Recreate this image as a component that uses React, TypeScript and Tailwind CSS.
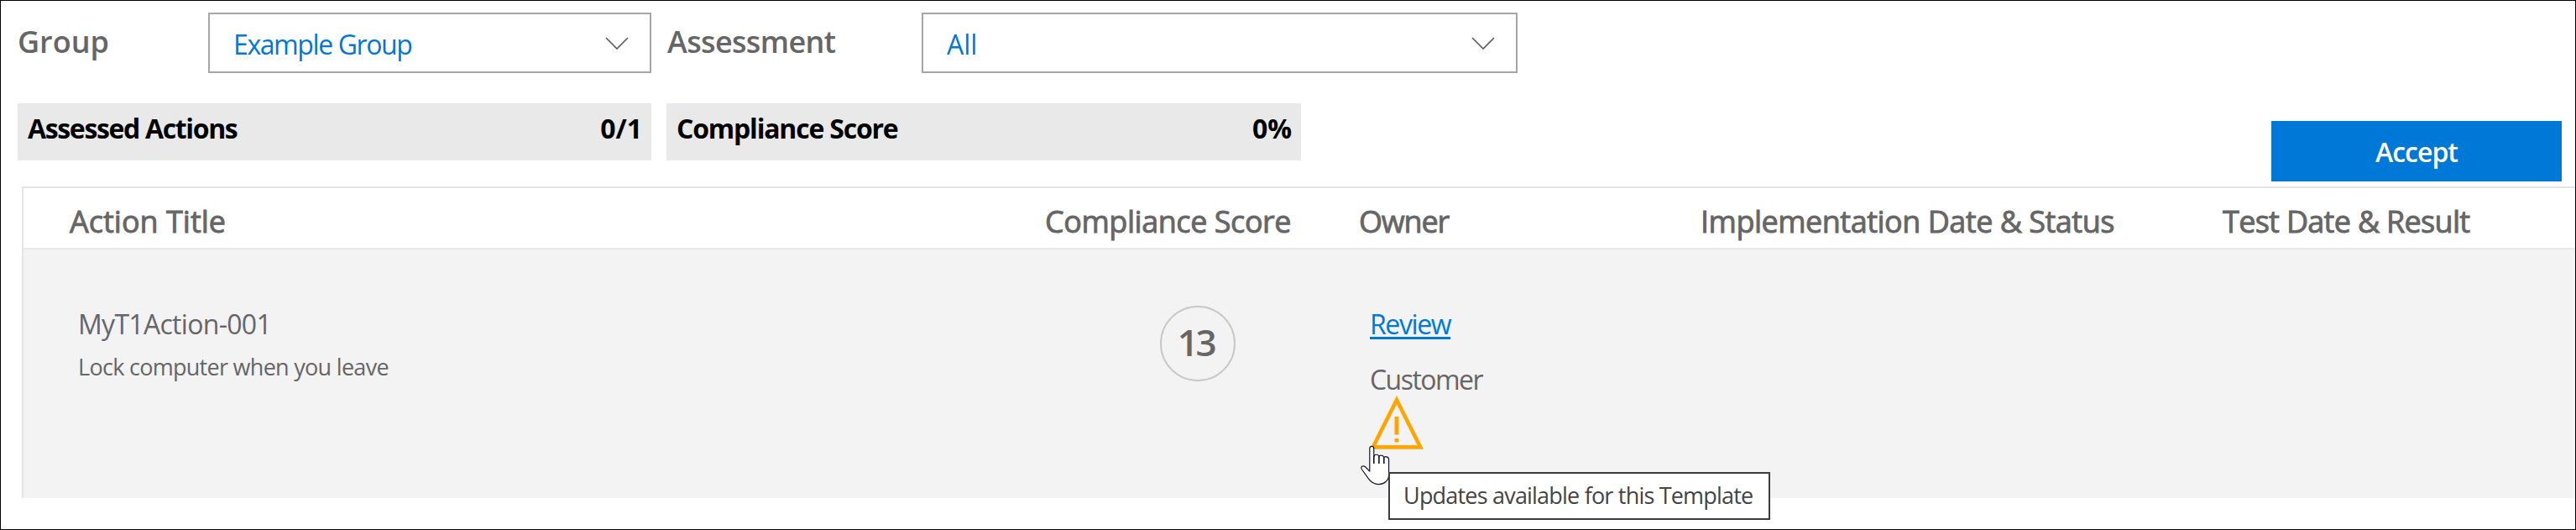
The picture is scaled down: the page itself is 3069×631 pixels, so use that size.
import type { ReactNode } from "react";

function Chevron() {
  return (
    <svg className="mt-[26px] mr-[24px] h-[18px] w-[30px] shrink-0" viewBox="0 0 30 18" fill="none">
      <path d="M2 2 L15 15 L28 2" stroke="#5f5f5f" strokeWidth="1.7" />
    </svg>
  );
}

function Select({ width, children }: { width: string; children: ReactNode }) {
  return (
    <div className={`flex h-[72px] shrink-0 items-start justify-between border-2 border-[#a6a6a6] bg-white pl-[28px] text-[32px] leading-none text-[#0078d7] ${width}`}>
      <span className="mt-[20px] whitespace-nowrap">{children}</span>
      <Chevron />
    </div>
  );
}

function Metric({ label, value, width, tracking }: { label: string; value: string; width: string; tracking: string }) {
  return (
    <div className={`flex h-[68px] shrink-0 items-start justify-between bg-[#e9e9e9] pt-[14px] pr-[11px] pl-[12px] text-[32px] leading-none font-bold text-black ${width}`}>
      <span className={tracking}>{label}</span>
      <span>{value}</span>
    </div>
  );
}

function WarningIcon() {
  return (
    <svg className="block h-[64px] w-[64px]" viewBox="0 0 64 64" fill="none">
      <path d="M32 5.2 L60.3 61.4 H3.7 Z" stroke="#ffa500" strokeWidth="4.6" />
      <path d="M29.5 25 h5 v21.5 h-5 Z M29.5 51 h5 v4.5 h-5 Z" fill="#ffa500" />
    </svg>
  );
}

function HandCursor() {
  return (
    <svg className="absolute top-[529px] left-[1620px] h-[48px] w-[36px]" viewBox="0 0 36 48">
      <path
        d="M10.8 31.2 V4.2 C10.8 0.4 15.8 0.4 15.8 4.2 V13.6 C16.6 10.4 21.6 10.4 21.9 14 C22.6 11.4 27.4 11.6 27.8 15 C28.6 12.9 33.6 13.2 33.6 17.2 V35.2 C33.6 42 28 46.6 21.6 46.6 C16.2 46.6 12.6 44.6 9.6 40.2 L1.6 29 C-0.8 25.2 2.8 23.8 5.8 26 Z"
        fill="#fff"
        stroke="#14142b"
        strokeWidth="1.2"
        strokeLinejoin="round"
      />
      <path d="M15.8 13 V22 M21.9 14 V22 M27.8 15 V22" stroke="#14142b" strokeWidth="1.6" fill="none" />
    </svg>
  );
}

export default function App() {
  return (
    <div className="relative h-[631px] w-[3069px] overflow-hidden border border-black bg-white font-['Open_Sans','Noto_Sans',sans-serif] whitespace-nowrap text-[#666666]">
      <div className="flex h-[122px] items-start pt-[14px] text-[36px] leading-none font-semibold">
        <div className="w-[247px] shrink-0 pt-[17px] pl-[20px]">Group</div>
        <Select width="w-[528px]">
          <span className="font-normal tracking-[-1.4px]">Example Group</span>
        </Select>
        <div className="w-[322px] shrink-0 pt-[17px] pl-[19px] tracking-[-0.65px]">Assessment</div>
        <Select width="w-[710px]">
          <span className="font-normal">All</span>
        </Select>
      </div>

      <div className="flex h-[99px] items-start pl-[20px]">
        <Metric label="Assessed Actions" value="0/1" width="w-[755px]" tracking="tracking-[-1.35px]" />
        <div className="w-[18px] shrink-0" />
        <Metric label="Compliance Score" value="0%" width="w-[756px]" tracking="tracking-[-1.2px]" />
        <button className="mt-[21px] mr-[16px] ml-auto flex h-[72px] w-[346px] items-start justify-center bg-[#0078d7] pt-[21px] text-[32px] leading-none font-semibold tracking-[-1px] text-white">
          Accept
        </button>
      </div>

      <div className="ml-[25px] border-t-2 border-l-2 border-[#e5e5e5]">
        <div className="flex h-[73px] items-start border-b-2 border-[#e9e9e9] pt-[22px] pl-[55px] text-[36px] leading-none [-webkit-text-stroke:0.9px_#666666]">
          <div className="w-[1162px] shrink-0">Action Title</div>
          <div className="w-[374px] shrink-0 tracking-[-0.45px]">Compliance Score</div>
          <div className="w-[407px] shrink-0 tracking-[-1.2px]">Owner</div>
          <div className="w-[622px] shrink-0 tracking-[-0.5px]">Implementation Date &amp; Status</div>
          <div className="tracking-[-0.7px]">Test Date &amp; Result</div>
        </div>
        <div className="flex h-[296px] items-start bg-[#f3f3f3] pl-[65px] text-[32px] leading-none">
          <div className="w-[1289px] shrink-0 pt-[73px]">
            <div className="tracking-[-0.7px]">MyT1Action-001</div>
            <div className="mt-[21px] text-[27px] leading-none tracking-[-0.71px]">Lock computer when you leave</div>
          </div>
          <div className="w-[250px] shrink-0 pt-[67px]">
            <div className="flex h-[90px] w-[90px] items-start justify-center rounded-full border-2 border-[#c8c8c8] pt-[19px] pr-[5px] text-[44px] leading-none font-semibold tracking-[-3.5px]">
              13
            </div>
          </div>
          <div className="flex flex-col items-start pt-[73px]">
            <a className="tracking-[-1.4px] text-[#0078d7] underline decoration-[3px] underline-offset-[3px]">Review</a>
            <div className="mt-[34px] tracking-[-1.55px]">Customer</div>
            <div className="mt-[3px]">
              <WarningIcon />
            </div>
          </div>
        </div>
      </div>

      <HandCursor />
      <div className="absolute top-[561px] left-[1653px] h-[57px] w-[455px] border-2 border-[#3c3c3c] bg-white pt-[12px] pl-[16px] text-[27px] leading-none tracking-[-0.8px] text-[#444444]">
        Updates available for this Template
      </div>
    </div>
  );
}
